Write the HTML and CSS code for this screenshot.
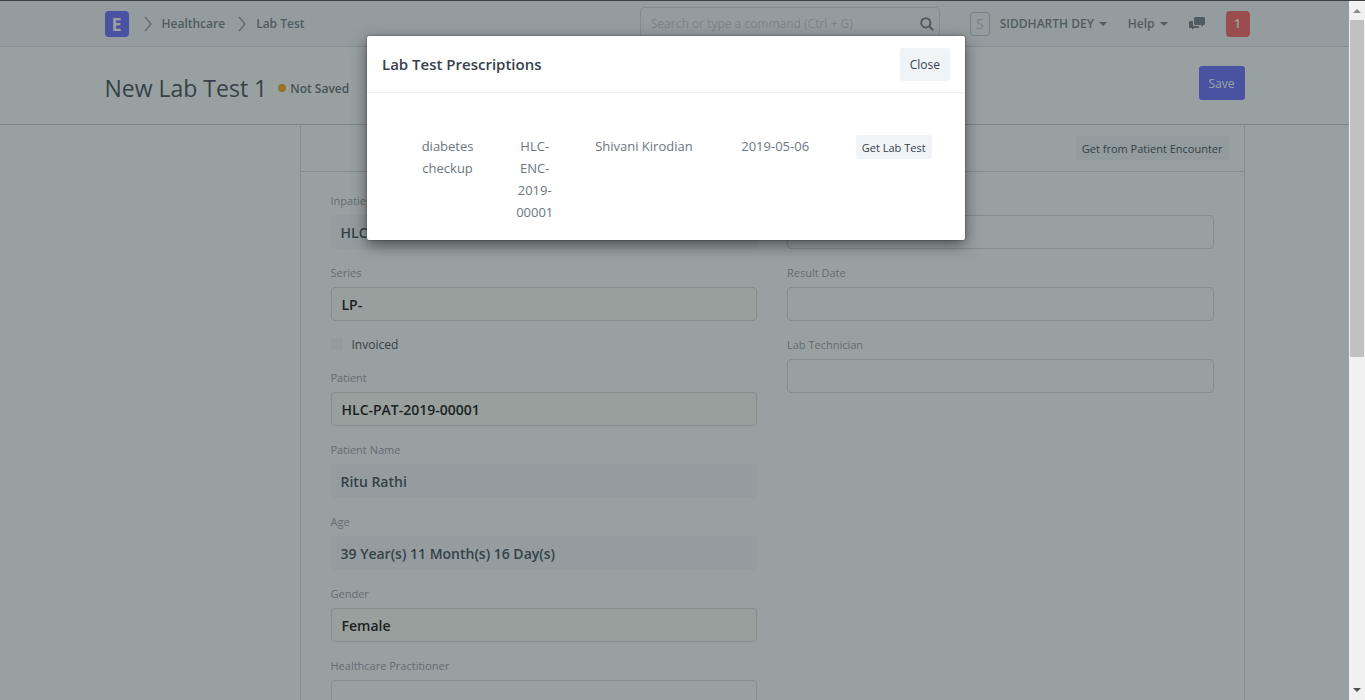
FILE: index.html
```html
<!DOCTYPE html>
<html lang="en">
<head>
  <meta charset="UTF-8" />
  <meta name="viewport" content="width=device-width, initial-scale=1.0"/>
  <title>New Lab Test 1</title>
  <link rel="stylesheet" href="styles.css">
</head>
<body>
  <div class="page">
    <header class="navbar">
      <div class="container navbar-inner">
        <a href="#" class="logo">E</a>
        <nav class="breadcrumb">
          <svg class="chevron" viewBox="0 0 8 16"><path d="M1 1l6 7-6 7"/></svg>
          <a href="#">Healthcare</a>
          <svg class="chevron" viewBox="0 0 8 16"><path d="M1 1l6 7-6 7"/></svg>
          <a href="#">Lab Test</a>
        </nav>
        <div class="search">
          <input type="text" class="search-input" aria-label="Search" placeholder="Search or type a command (Ctrl + G)">
          <svg class="search-icon" viewBox="0 0 14 14"><circle cx="5.8" cy="5.8" r="4.6"/><path d="M9.2 9.2l4 4"/></svg>
        </div>
        <div class="nav-right">
          <span class="avatar">S</span>
          <button class="nav-btn user-btn">SIDDHARTH DEY <span class="caret"></span></button>
          <button class="nav-btn help-btn">Help <span class="caret"></span></button>
          <button class="nav-btn chat-btn" aria-label="Chat">
            <svg class="chat-icon" viewBox="0 0 16 13"><path d="M6 0h9a1 1 0 0 1 1 1v6a1 1 0 0 1-1 1h-1v2l-2-2H6a1 1 0 0 1-1-1V1a1 1 0 0 1 1-1z"/><path d="M1 4h3v4a1 1 0 0 0 1 1h5v1a1 1 0 0 1-1 1H5l-2 2v-2H1a1 1 0 0 1-1-1V5a1 1 0 0 1 1-1z"/></svg>
          </button>
          <button class="notify-btn">1</button>
        </div>
      </div>
    </header>

    <div class="page-head">
      <div class="container page-head-inner">
        <h1>New Lab Test 1</h1>
        <span class="indicator">Not Saved</span>
        <button class="btn btn-primary">Save</button>
      </div>
    </div>

    <div class="container">
      <main class="form">
        <div class="toolbar">
          <button class="btn btn-small">Get from Patient Encounter</button>
        </div>
        <div class="form-body">
          <div class="column">
            <div class="field">
              <label for="inpatient">Inpatient Record</label>
              <input id="inpatient" class="readonly" type="text" value="HLC-INP-2019-00001" readonly>
            </div>
            <div class="field">
              <label for="series">Series</label>
              <input id="series" class="required" type="text" value="LP-">
            </div>
            <div class="check">
              <input id="invoiced" type="checkbox" disabled>
              <label for="invoiced">Invoiced</label>
            </div>
            <div class="field">
              <label for="patient">Patient</label>
              <input id="patient" class="required" type="text" value="HLC-PAT-2019-00001">
            </div>
            <div class="field">
              <label for="patient-name">Patient Name</label>
              <input id="patient-name" class="readonly" type="text" value="Ritu Rathi" readonly>
            </div>
            <div class="field">
              <label for="age">Age</label>
              <input id="age" class="readonly" type="text" value="39 Year(s) 11 Month(s) 16 Day(s)" readonly>
            </div>
            <div class="field">
              <label for="gender">Gender</label>
              <input id="gender" class="required" type="text" value="Female">
            </div>
            <div class="field">
              <label for="practitioner">Healthcare Practitioner</label>
              <input id="practitioner" type="text">
            </div>
          </div>
          <div class="column">
            <div class="field">
              <label for="company">Company</label>
              <input id="company" type="text">
            </div>
            <div class="field">
              <label for="result-date">Result Date</label>
              <input id="result-date" type="text">
            </div>
            <div class="field">
              <label for="technician">Lab Technician</label>
              <input id="technician" type="text">
            </div>
          </div>
        </div>
      </main>
    </div>

    <div class="backdrop">
      <section class="modal" role="dialog" aria-labelledby="modal-title">
        <div class="modal-header">
          <h2 id="modal-title">Lab Test Prescriptions</h2>
          <button class="btn btn-default">Close</button>
        </div>
        <div class="modal-body">
          <table class="prescriptions">
            <colgroup>
              <col class="col-2"><col class="col-2"><col class="col-3"><col class="col-3"><col class="col-2">
            </colgroup>
            <tbody>
              <tr>
                <td>diabetes checkup</td>
                <td>HLC-ENC-2019-00001</td>
                <td class="name">Shivani Kirodian</td>
                <td>2019-05-06</td>
                <td class="action"><button class="btn btn-small">Get Lab Test</button></td>
              </tr>
            </tbody>
          </table>
        </div>
      </section>
    </div>
  </div>

  <div class="scrollbar">
    <span class="arrow arrow-up"></span>
    <div class="track"><div class="thumb"></div></div>
    <span class="arrow arrow-down"></span>
  </div>
</body>
</html>
```
FILE: styles.css
```css
* {
  margin: 0;
  padding: 0;
  box-sizing: border-box;
}
body {
  display: flex;
  height: 100vh;
  overflow: hidden;
  border-top: 1px solid #3c4144;
  background-color: white;
  color: #36414c;
  font-family: "Open Sans", "Noto Sans", sans-serif;
  font-size: 12px;
}
a {
  color: inherit;
  text-decoration: none;
}
button,
input {
  font-family: inherit;
  font-size: inherit;
  color: inherit;
}
button {
  border: none;
  cursor: pointer;
}
.page {
  flex: 1;
  position: relative;
  overflow: hidden;
}
.container {
  max-width: 1170px;
  margin: 0 auto;
  padding: 0 15px;
}

/* NAVBAR */
.navbar {
  height: 46px;
  background-color: #f5f7fa;
  border-bottom: 1px solid #d1d8dd;
  color: #6c7680;
  font-weight: 600;
}
.navbar-inner {
  display: flex;
  align-items: center;
  height: 100%;
}
.logo {
  width: 24px;
  height: 26px;
  border-radius: 4px;
  background-color: #5e64ff;
  color: white;
  font-size: 18px;
  font-weight: 700;
  line-height: 26px;
  text-align: center;
}
.breadcrumb {
  display: flex;
  align-items: center;
  gap: 10px;
  flex: 1;
  margin-left: 15px;
}
.chevron {
  width: 8px;
  height: 16px;
  fill: none;
  stroke: #8d99a6;
  stroke-width: 1.5;
}
.breadcrumb .chevron + a {
  margin-right: 3px;
}
.search {
  position: relative;
  width: 300px;
}
.search-input {
  width: 100%;
  height: 34px;
  padding: 0 10px;
  border: 1px solid #d1d8dd;
  border-radius: 4px;
  background-color: transparent;
}
.search-input::placeholder {
  color: #c0c8ce;
}
.search-icon {
  position: absolute;
  top: 10px;
  right: 6px;
  width: 14px;
  height: 14px;
  fill: none;
  stroke: #6c7680;
  stroke-width: 2;
}
.nav-right {
  display: flex;
  align-items: center;
  margin-left: 30px;
  margin-right: -5px;
}
.avatar {
  width: 20px;
  height: 24px;
  border: 1px solid #b8c2cc;
  border-radius: 3px;
  color: #b8c2cc;
  font-size: 14px;
  font-weight: 400;
  line-height: 22px;
  text-align: center;
}
.nav-btn {
  display: flex;
  align-items: center;
  gap: 5px;
  background: none;
  font-weight: 600;
}
.user-btn {
  margin-left: 10px;
}
.help-btn,
.chat-btn,
.notify-btn {
  margin-left: 21px;
}
.caret {
  border-top: 4px solid #6c7680;
  border-left: 4px solid transparent;
  border-right: 4px solid transparent;
}
.chat-icon {
  width: 16px;
  height: 13px;
  fill: #6c7680;
}
.notify-btn {
  width: 24px;
  height: 26px;
  border-radius: 4px;
  background-color: #ff5858;
  color: white;
  font-weight: 600;
}

/* PAGE HEAD */
.page-head {
  height: 78px;
  border-bottom: 1px solid #c4ccd2;
}
.page-head-inner {
  display: flex;
  align-items: center;
  height: 100%;
  padding-bottom: 5px;
}
h1 {
  font-size: 23px;
  font-weight: 500;
  padding-top: 10px;
}
.indicator {
  display: flex;
  align-items: center;
  gap: 4px;
  flex: 1;
  margin-left: 11px;
  padding-top: 10px;
  font-weight: 600;
  color: #5a646e;
}
.indicator::before {
  content: "";
  width: 8px;
  height: 8px;
  border-radius: 50%;
  background-color: #ffa00a;
}
.btn {
  border-radius: 3px;
  background-color: #f0f4f7;
}
.btn-default {
  height: 33px;
  padding: 0 10px;
}
.btn-primary {
  height: 34px;
  padding: 0 10px;
  background-color: #5e64ff;
  color: white;
}
.btn-small {
  height: 24px;
  padding: 0 6px;
  font-size: 11px;
  white-space: nowrap;
}

/* FORM */
.form {
  margin-left: 195px;
  border-left: 1px solid #d1d8dd;
  border-right: 1px solid #d1d8dd;
}
.toolbar {
  display: flex;
  justify-content: flex-end;
  align-items: center;
  height: 47px;
  padding: 0 15px;
  border-bottom: 1px solid #d1d8dd;
}
.form-body {
  display: flex;
  gap: 30px;
  padding: 19px 30px;
}
.column {
  flex: 1;
}
.field {
  margin-bottom: 14px;
}
.field label {
  display: block;
  height: 20px;
  margin-bottom: 4px;
  line-height: 20px;
  font-size: 11px;
  color: #8d99a6;
}
.field input {
  display: block;
  width: 100%;
  height: 34px;
  padding: 0 10px;
  border: 1px solid #d1d8dd;
  border-radius: 4px;
  background-color: white;
  color: black;
  font-size: 14px;
  font-weight: 600;
}
.field .required {
  background-color: #fffdf4;
}
.field .readonly {
  padding: 0 9px;
  border-color: #f5f7fa;
  background-color: #f5f7fa;
  color: #36414c;
}
.check {
  display: flex;
  align-items: center;
  gap: 9px;
  height: 18px;
  margin-bottom: 15px;
}
.check input {
  appearance: none;
  width: 12px;
  height: 12px;
  border-radius: 2px;
  background-color: #f0f4f7;
}

/* MODAL */
.backdrop {
  position: absolute;
  inset: 0;
  padding-top: 35px;
  padding-right: 17px;
  background-color: rgba(51, 65, 67, 0.5);
}
.modal {
  width: 598px;
  max-width: 100%;
  margin: 0 auto;
  border-radius: 2px;
  background-color: white;
  box-shadow: 0 5px 15px rgba(0, 0, 0, 0.5), 0 0 2px rgba(0, 0, 0, 0.5);
}
.modal-header {
  display: flex;
  justify-content: space-between;
  align-items: center;
  height: 57px;
  padding: 0 15px;
  border-bottom: 1px solid #ebeff2;
}
h2 {
  font-size: 15px;
  font-weight: 600;
}
.modal-body {
  padding: 42px 37px 17px;
}
.prescriptions {
  width: 100%;
  table-layout: fixed;
  border-collapse: collapse;
  color: #6c7680;
  font-size: 13px;
  line-height: 22px;
}
.col-2 {
  width: 16.6%;
}
.col-3 {
  width: 25%;
}
.prescriptions td {
  padding: 0 15px;
  text-align: center;
  vertical-align: top;
}
.prescriptions .name {
  white-space: nowrap;
}
.prescriptions .action {
  padding-right: 0;
  text-align: left;
}
.prescriptions .btn {
  color: #36414c;
}

/* SCROLLBAR */
.scrollbar {
  display: flex;
  flex-direction: column;
  align-items: center;
  width: 16px;
  padding: 8px 0;
  background-color: #f1f1f1;
}
.arrow {
  border-left: 4px solid transparent;
  border-right: 4px solid transparent;
}
.arrow-up {
  border-bottom: 4px solid #8a8a8a;
}
.arrow-down {
  border-top: 4px solid #505050;
}
.track {
  flex: 1;
  width: 100%;
  padding: 7px 1px;
}
.thumb {
  height: 51%;
  background-color: #c1c1c1;
}
```
